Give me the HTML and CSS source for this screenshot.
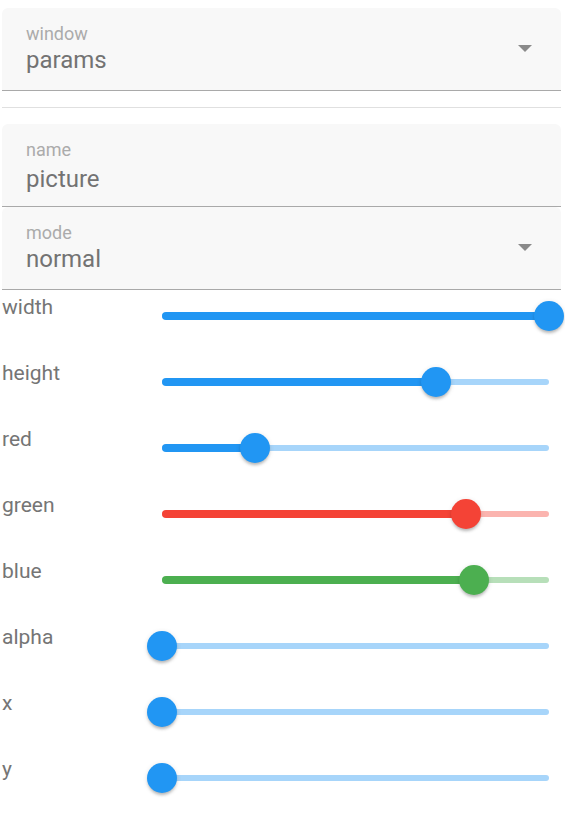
FILE: index.html
```html
<!DOCTYPE html>
<html>
<head>
<meta charset="utf-8">
<link rel="stylesheet" href="styles.css">
</head>
<body>
<div class="panel">
  <div class="field select">
    <div class="field-label">window</div>
    <div class="field-value">params</div>
    <svg class="arrow" width="14" height="7" viewBox="0 0 14 7"><path d="M0 0 L7 7 L14 0 Z" fill="#8a8a8a"/></svg>
  </div>
  <div class="divider"></div>
  <div class="field text">
    <div class="field-label">name</div>
    <div class="field-value">picture</div>
  </div>
  <div class="field select">
    <div class="field-label">mode</div>
    <div class="field-value">normal</div>
    <svg class="arrow" width="14" height="7" viewBox="0 0 14 7"><path d="M0 0 L7 7 L14 0 Z" fill="#8a8a8a"/></svg>
  </div>

  <div class="rows">
    <div class="row">
      <div class="row-label">width</div>
      <div class="slider blue"><div class="rail"></div><div class="track" style="width:100%"></div><div class="thumb" style="left:100%"></div></div>
    </div>
    <div class="row">
      <div class="row-label">height</div>
      <div class="slider blue"><div class="rail"></div><div class="track" style="width:70.8%"></div><div class="thumb" style="left:70.8%"></div></div>
    </div>
    <div class="row">
      <div class="row-label">red</div>
      <div class="slider blue"><div class="rail"></div><div class="track" style="width:24%"></div><div class="thumb" style="left:24%"></div></div>
    </div>
    <div class="row">
      <div class="row-label">green</div>
      <div class="slider red"><div class="rail"></div><div class="track" style="width:78.6%"></div><div class="thumb" style="left:78.6%"></div></div>
    </div>
    <div class="row">
      <div class="row-label">blue</div>
      <div class="slider green"><div class="rail"></div><div class="track" style="width:80.6%"></div><div class="thumb" style="left:80.6%"></div></div>
    </div>
    <div class="row">
      <div class="row-label">alpha</div>
      <div class="slider blue"><div class="rail"></div><div class="thumb" style="left:0%"></div></div>
    </div>
    <div class="row">
      <div class="row-label">x</div>
      <div class="slider blue"><div class="rail"></div><div class="thumb" style="left:0%"></div></div>
    </div>
    <div class="row">
      <div class="row-label">y</div>
      <div class="slider blue"><div class="rail"></div><div class="thumb" style="left:0%"></div></div>
    </div>
  </div>
</div>
</body>
</html>
```

FILE: styles.css
```css
html, body {
  margin: 0;
  padding: 0;
  background: #ffffff;
}
body {
  font-family: Roboto, "Liberation Sans", sans-serif;
}
.panel {
  padding: 8px 4px 0 2px;
}
.field {
  position: relative;
  background: #f8f8f8;
  border-radius: 6px 6px 0 0;
  border-bottom: 1px solid #a9a9a9;
  padding: 16px 22px 16px 24px;
  height: 50px;
}
.field-label {
  font-size: 18px;
  line-height: 20px;
  color: #ababab;
}
.field-value {
  font-size: 24px;
  line-height: 28px;
  margin-top: 2px;
  color: #737373;
}
.text .field-value {
  margin-top: 5px;
}
.arrow {
  position: absolute;
  right: 29px;
  top: 37px;
}
.divider {
  height: 1px;
  background: #e0e0e0;
  margin: 16px 0;
}
.rows {
  display: flex;
  flex-direction: column;
  margin-top: 1px;
}
.row {
  display: grid;
  grid-template-columns: 160px 387px;
  height: 66px;
}
.row-label {
  font-size: 21px;
  line-height: 24px;
  margin-top: 4px;
  color: #757575;
}
.slider {
  position: relative;
  height: 50px;
}
.rail {
  position: absolute;
  left: 0;
  right: 0;
  top: 22px;
  height: 6px;
  border-radius: 3px;
}
.track {
  position: absolute;
  left: 0;
  top: 21px;
  height: 8px;
  border-radius: 4px;
}
.thumb {
  position: absolute;
  top: 25px;
  width: 30px;
  height: 30px;
  margin: -15px 0 0 -15px;
  border-radius: 50%;
  box-shadow: 0 3px 3px -1px rgba(0,0,0,0.22), 0 1px 5px rgba(0,0,0,0.12);
}
.blue .rail { background: #a7d5fa; }
.blue .track, .blue .thumb { background: #2196f3; }
.red .rail { background: #fbb4af; }
.red .track, .red .thumb { background: #f44336; }
.green .rail { background: #b7dfb9; }
.green .track, .green .thumb { background: #4caf50; }
```
